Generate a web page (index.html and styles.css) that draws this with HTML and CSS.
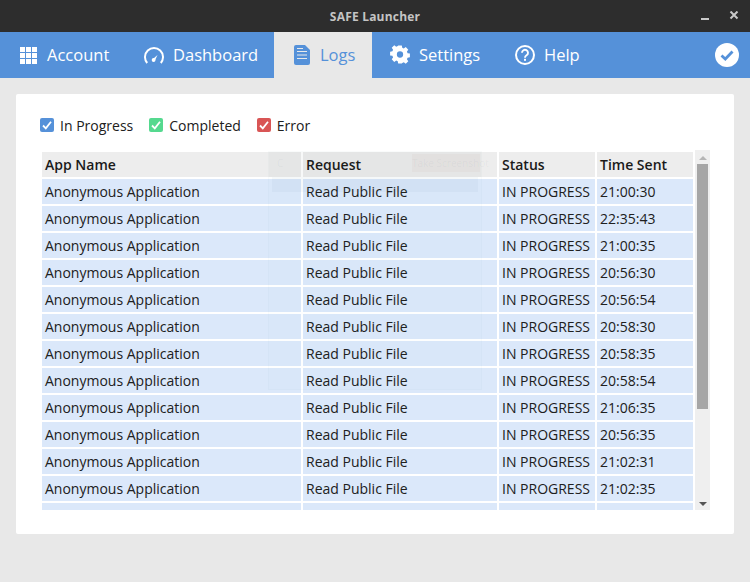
FILE: index.html
```html
<!DOCTYPE html>
<html lang="en">
<head>
<meta charset="utf-8">
<title>SAFE Launcher</title>
<link rel="stylesheet" href="styles.css">
</head>
<body>
<header class="titlebar">
  <span class="title">SAFE Launcher</span>
  <span class="win-btns">
    <svg class="win-icon win-min" viewBox="0 0 10 10"><rect x="1" y="7" width="8" height="2" fill="#c9c9c9"/></svg>
    <svg class="win-icon" viewBox="0 0 10 10"><path d="M1.500 .5l7 7M8.500 .5l-7 7" stroke="#c9c9c9" stroke-width="2" fill="none"/></svg>
  </span>
</header>
<nav class="nav">
  <a class="tab tab-account">
    <svg class="ico ico-small" width="17" height="17" viewBox="0 0 17 17" fill="#fff"><rect width="5" height="5"/><rect x="6" width="5" height="5"/><rect x="12" width="5" height="5"/><rect y="6" width="5" height="5"/><rect x="6" y="6" width="5" height="5"/><rect x="12" y="6" width="5" height="5"/><rect y="12" width="5" height="5"/><rect x="6" y="12" width="5" height="5"/><rect x="12" y="12" width="5" height="5"/></svg>
    <span class="tab-text">Account</span></a>
  <a class="tab tab-dash">
    <svg class="ico ico-small" width="20" height="17" viewBox="0 0 20 17"><path d="M3.200 16A9 9 0 1 1 16.800 16" fill="none" stroke="#fff" stroke-width="2"/><path d="M8.600 12.200L13.500 8l-2.800 6z" fill="#fff"/><circle cx="9.600" cy="13" r="1.900" fill="#fff"/></svg>
    <span class="tab-text">Dashboard</span></a>
  <a class="tab active">
    <svg class="ico" width="16" height="20" viewBox="0 0 16 20"><path d="M2 0h9l5 5v13a2 2 0 0 1-2 2H2a2 2 0 0 1-2-2V2a2 2 0 0 1 2-2z" fill="#5591d9"/><path d="M3 6.500h10M3 10h10M3 13.500h10M3 3.500h6" stroke="#e9e9e9" stroke-width="1.200"/></svg>
    <span class="tab-text">Logs</span></a>
  <a class="tab tab-settings">
    <svg class="ico" width="20" height="20" viewBox="0 0 20 20"><path fill="#fff" fill-rule="evenodd" d="M8 0h4l.5 2.600 1.700.7L16.400 1.800l2.800 2.800-1.500 2.200.7 1.700 2.600.5v4l-2.600.5-.7 1.700 1.500 2.200-2.800 2.800-2.200-1.500-1.700.7L12 20H8l-.5-2.600-1.700-.7-2.200 1.500L.8 15.400l1.500-2.200-.7-1.700L-1 11V7l2.600-.5.7-1.700L.8 2.600 3.600-.2l2.200 1.500 1.700-.7zM10 6.500a3.500 3.500 0 1 0 0 7 3.500 3.500 0 0 0 0-7z" transform="translate(1 0.500) scale(.9)"/></svg>
    <span class="tab-text">Settings</span></a>
  <a class="tab tab-help">
    <svg class="ico" width="20" height="20" viewBox="0 0 20 20"><circle cx="10" cy="10" r="9" fill="none" stroke="#fff" stroke-width="2"/><path d="M7 7.800a3 3 0 1 1 4.600 2.500c-1 .7-1.600 1.100-1.600 2.400" fill="none" stroke="#fff" stroke-width="1.900"/><rect x="9" y="13.800" width="2" height="2" fill="#fff"/></svg>
    <span class="tab-text">Help</span></a>
  <svg class="status" width="24" height="24" viewBox="0 0 24 24"><circle cx="12" cy="12" r="12" fill="#fff"/><path d="M6.500 12.500l3.800 3.500 7.200-7.500" fill="none" stroke="#5591d9" stroke-width="2.800"/></svg>
</nav>
<main class="content">
  <section class="panel">
    <div class="filters">
      <label class="filter"><span class="check check-blue"><svg width="14" height="14" viewBox="0 0 14 14"><path d="M3 7.500l2.800 2.800L11 3.800" fill="none" stroke="#fff" stroke-width="1.800"/></svg></span>In Progress</label>
      <label class="filter"><span class="check check-green"><svg width="14" height="14" viewBox="0 0 14 14"><path d="M3 7.500l2.800 2.800L11 3.800" fill="none" stroke="#fff" stroke-width="1.800"/></svg></span>Completed</label>
      <label class="filter"><span class="check check-red"><svg width="14" height="14" viewBox="0 0 14 14"><path d="M3 7.500l2.800 2.800L11 3.800" fill="none" stroke="#fff" stroke-width="1.800"/></svg></span>Error</label>
    </div>
    <div class="log">
      <div class="rows">
        <div class="row head"><span>App Name</span><span>Request</span><span>Status</span><span>Time Sent</span></div>
        <div class="row"><span>Anonymous Application</span><span>Read Public File</span><span>IN PROGRESS</span><span>21:00:30</span></div>
        <div class="row"><span>Anonymous Application</span><span>Read Public File</span><span>IN PROGRESS</span><span>22:35:43</span></div>
        <div class="row"><span>Anonymous Application</span><span>Read Public File</span><span>IN PROGRESS</span><span>21:00:35</span></div>
        <div class="row"><span>Anonymous Application</span><span>Read Public File</span><span>IN PROGRESS</span><span>20:56:30</span></div>
        <div class="row"><span>Anonymous Application</span><span>Read Public File</span><span>IN PROGRESS</span><span>20:56:54</span></div>
        <div class="row"><span>Anonymous Application</span><span>Read Public File</span><span>IN PROGRESS</span><span>20:58:30</span></div>
        <div class="row"><span>Anonymous Application</span><span>Read Public File</span><span>IN PROGRESS</span><span>20:58:35</span></div>
        <div class="row"><span>Anonymous Application</span><span>Read Public File</span><span>IN PROGRESS</span><span>20:58:54</span></div>
        <div class="row"><span>Anonymous Application</span><span>Read Public File</span><span>IN PROGRESS</span><span>21:06:35</span></div>
        <div class="row"><span>Anonymous Application</span><span>Read Public File</span><span>IN PROGRESS</span><span>20:56:35</span></div>
        <div class="row"><span>Anonymous Application</span><span>Read Public File</span><span>IN PROGRESS</span><span>21:02:31</span></div>
        <div class="row"><span>Anonymous Application</span><span>Read Public File</span><span>IN PROGRESS</span><span>21:02:35</span></div>
        <div class="row"><span></span><span></span><span></span><span></span></div>
      </div>
      <div class="scrollbar">
        <span class="arrow arrow-up"></span>
        <span class="thumb"></span>
        <span class="arrow arrow-down"></span>
      </div>
    </div>
  </section>
</main>
<div class="ghost">
  <div class="ghost-top"><span class="ghost-cancel">C</span><span class="ghost-action">Take Screenshot</span></div>
  <div class="ghost-band"></div>
</div>
</body>
</html>
```
FILE: styles.css
```css
* { box-sizing: border-box; }
html, body { margin: 0; height: 100%; }
body {
  width: 750px;
  height: 582px;
  overflow: hidden;
  background: #e8e8e8;
  font-family: "Open Sans", sans-serif;
  color: #202020;
  display: flex;
  flex-direction: column;
  position: relative;
}
.titlebar {
  height: 32px;
  flex: none;
  background: #2d2d2d;
  color: #c4c4c4;
  display: flex;
  align-items: center;
  justify-content: center;
  position: relative;
  font-size: 12px;
  font-weight: 700;
  letter-spacing: 0.2px;
}
.win-btns {
  position: absolute;
  right: 11px;
  top: 11px;
  display: flex;
}
.win-icon { width: 10px; height: 10px; }
.win-min { margin-right: 19px; }
.nav {
  height: 46px;
  flex: none;
  background: #5591d9;
  display: flex;
  align-items: center;
  padding-left: 20px;
  font-size: 16.5px;
  color: #fff;
}
.tab {
  display: flex;
  align-items: center;
  height: 46px;
  white-space: nowrap;
}
.tab-text { margin-bottom: 2px; }
.ico { margin-right: 10px; flex: none; }
.ico-small { margin-top: 1px; }
.tab-account { width: 124px; }
.tab-dash { width: 130px; }
.tab-dash .ico { margin-right: 9px; }
.active {
  background: #e8e8e8;
  color: #5591d9;
  width: 98px;
  padding-left: 20px;
}
.tab-settings { margin-left: 18px; width: 125px; }
.tab-settings .ico { margin-right: 9px; }
.tab-help { width: 200px; }
.tab-help .ico { margin-right: 9px; }
.status { margin-left: auto; margin-right: 11px; flex: none; }
.content {
  flex: 1;
  padding: 16px 16px 48px;
  display: flex;
}
.panel {
  flex: 1;
  background: #fff;
  border-radius: 2px;
  padding: 21px 24px 24px 24px;
}
.filters {
  display: flex;
  height: 20px;
  align-items: center;
  font-size: 14px;
  gap: 16px;
}
.filter { display: flex; align-items: center; }
.check {
  width: 14px;
  height: 14px;
  border-radius: 2px;
  margin-right: 6px;
  display: block;
}
.check svg { display: block; }
.check-blue { background: #5591d9; }
.check-green { background: #55d98f; }
.check-red { background: #d95555; }
.log {
  display: flex;
  height: 360px;
  margin-top: 15px;
  overflow: hidden;
}
.rows {
  width: 655px;
  padding-left: 2px;
  padding-top: 2px;
  display: flex;
  flex-direction: column;
  gap: 2px;
}
.row {
  display: grid;
  grid-template-columns: 259px 194px 96px 96px;
  column-gap: 2px;
  flex: none;
}
.row span {
  height: 25px;
  line-height: 25px;
  padding-left: 3px;
  font-size: 14px;
  background: #dbe8fa;
  white-space: nowrap;
}
.head span {
  background: #ededed;
  font-weight: 600;
  color: #1a1a1a;
}
.scrollbar {
  width: 15px;
  background: #efefef;
  display: flex;
  flex-direction: column;
  align-items: center;
  flex: none;
}
.thumb {
  width: 11px;
  height: 245px;
  background: #a6a6a6;
  margin-top: 4px;
}
.arrow { width: 0; height: 0; border-left: 4px solid transparent; border-right: 4px solid transparent; }
.arrow-up { border-bottom: 4px solid #b5b5b5; margin-top: 6px; }
.arrow-down { border-top: 4px solid #555; margin-top: auto; margin-bottom: 4px; }
.ghost {
  position: absolute;
  left: 268px;
  top: 151px;
  width: 214px;
  height: 239px;
  background: rgba(120, 130, 150, 0.012);
  border: 1px solid rgba(100, 110, 130, 0.025);
  pointer-events: none;
  font-size: 10px;
  color: rgba(50, 70, 100, 0.06);
}
.ghost-top {
  height: 25px;
  background: rgba(70, 70, 70, 0.03);
  display: flex;
  align-items: center;
  justify-content: space-between;
  padding: 0 1px 3px 8px;
}
.ghost-action {
  background: rgba(170, 60, 40, 0.03);
  height: 18px;
  line-height: 18px;
  width: 68px;
  text-align: center;
  white-space: nowrap;
}
.ghost-band {
  margin: 0 3px;
  height: 15px;
  background: rgba(60, 90, 130, 0.04);
}
```
